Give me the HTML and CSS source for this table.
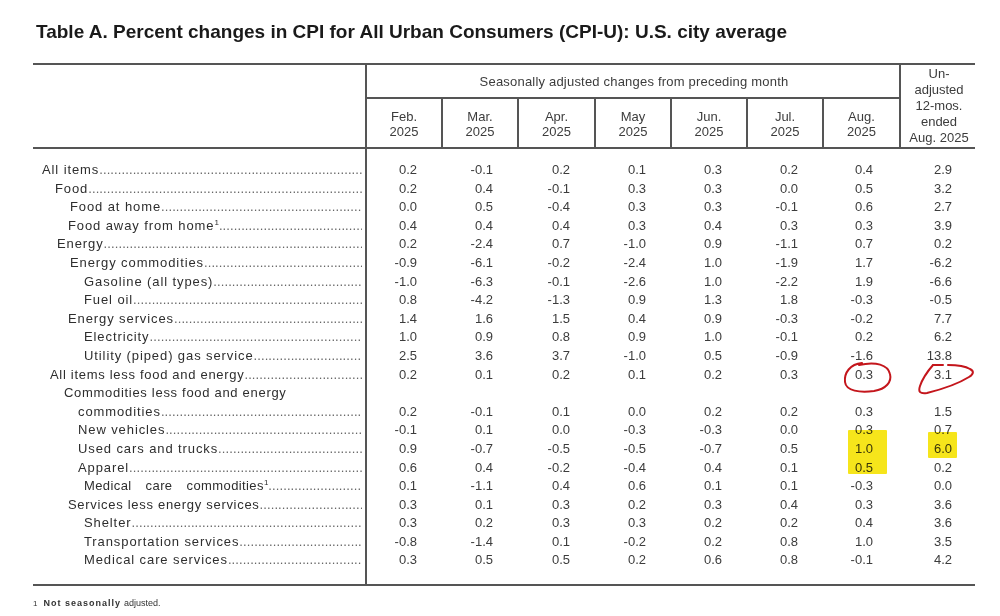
FILE: index.html
```html
<!DOCTYPE html>
<html lang="en">
<head>
<meta charset="utf-8">
<title>Table A. Percent changes in CPI</title>
<link rel="stylesheet" href="styles.css">
</head>
<body>
<div class="page">
  <h1 class="title">Table A. Percent changes in CPI for All Urban Consumers (CPI-U): U.S. city average</h1>

  <div class="table">
    <div class="thead">
      <div class="th-blank"></div>
      <div class="th-group">Seasonally adjusted changes from preceding month</div>
      <div class="th-month">Feb.<br>2025</div>
      <div class="th-month">Mar.<br>2025</div>
      <div class="th-month">Apr.<br>2025</div>
      <div class="th-month">May<br>2025</div>
      <div class="th-month">Jun.<br>2025</div>
      <div class="th-month">Jul.<br>2025</div>
      <div class="th-month">Aug.<br>2025</div>
      <div class="th-unadj">Un-<br>adjusted<br>12-mos.<br>ended<br>Aug. 2025</div>
    </div>

    <div class="tbody">
      <div class="lbl ind-a"><span class="txt">All items</span><span class="dots"></span></div>
      <div class="num">0.2</div><div class="num">-0.1</div><div class="num">0.2</div><div class="num">0.1</div><div class="num">0.3</div><div class="num">0.2</div><div class="num aug">0.4</div><div class="num un">2.9</div>

      <div class="lbl ind-c"><span class="txt">Food</span><span class="dots"></span></div>
      <div class="num">0.2</div><div class="num">0.4</div><div class="num">-0.1</div><div class="num">0.3</div><div class="num">0.3</div><div class="num">0.0</div><div class="num aug">0.5</div><div class="num un">3.2</div>

      <div class="lbl ind-e2"><span class="txt">Food at home</span><span class="dots"></span></div>
      <div class="num">0.0</div><div class="num">0.5</div><div class="num">-0.4</div><div class="num">0.3</div><div class="num">0.3</div><div class="num">-0.1</div><div class="num aug">0.6</div><div class="num un">2.7</div>

      <div class="lbl ind-e"><span class="txt">Food away from home<sup>1</sup></span><span class="dots"></span></div>
      <div class="num">0.4</div><div class="num">0.4</div><div class="num">0.4</div><div class="num">0.3</div><div class="num">0.4</div><div class="num">0.3</div><div class="num aug">0.3</div><div class="num un">3.9</div>

      <div class="lbl ind-c2"><span class="txt">Energy</span><span class="dots"></span></div>
      <div class="num">0.2</div><div class="num">-2.4</div><div class="num">0.7</div><div class="num">-1.0</div><div class="num">0.9</div><div class="num">-1.1</div><div class="num aug">0.7</div><div class="num un">0.2</div>

      <div class="lbl ind-e2"><span class="txt">Energy commodities</span><span class="dots"></span></div>
      <div class="num">-0.9</div><div class="num">-6.1</div><div class="num">-0.2</div><div class="num">-2.4</div><div class="num">1.0</div><div class="num">-1.9</div><div class="num aug">1.7</div><div class="num un">-6.2</div>

      <div class="lbl ind-g"><span class="txt">Gasoline (all types)</span><span class="dots"></span></div>
      <div class="num">-1.0</div><div class="num">-6.3</div><div class="num">-0.1</div><div class="num">-2.6</div><div class="num">1.0</div><div class="num">-2.2</div><div class="num aug">1.9</div><div class="num un">-6.6</div>

      <div class="lbl ind-g"><span class="txt">Fuel oil</span><span class="dots"></span></div>
      <div class="num">0.8</div><div class="num">-4.2</div><div class="num">-1.3</div><div class="num">0.9</div><div class="num">1.3</div><div class="num">1.8</div><div class="num aug">-0.3</div><div class="num un">-0.5</div>

      <div class="lbl ind-e"><span class="txt">Energy services</span><span class="dots"></span></div>
      <div class="num">1.4</div><div class="num">1.6</div><div class="num">1.5</div><div class="num">0.4</div><div class="num">0.9</div><div class="num">-0.3</div><div class="num aug">-0.2</div><div class="num un">7.7</div>

      <div class="lbl ind-g"><span class="txt">Electricity</span><span class="dots"></span></div>
      <div class="num">1.0</div><div class="num">0.9</div><div class="num">0.8</div><div class="num">0.9</div><div class="num">1.0</div><div class="num">-0.1</div><div class="num aug">0.2</div><div class="num un">6.2</div>

      <div class="lbl ind-g"><span class="txt">Utility (piped) gas service</span><span class="dots"></span></div>
      <div class="num">2.5</div><div class="num">3.6</div><div class="num">3.7</div><div class="num">-1.0</div><div class="num">0.5</div><div class="num">-0.9</div><div class="num aug">-1.6</div><div class="num un">13.8</div>

      <div class="lbl ind-b tight"><span class="txt">All items less food and energy</span><span class="dots"></span></div>
      <div class="num">0.2</div><div class="num">0.1</div><div class="num">0.2</div><div class="num">0.1</div><div class="num">0.2</div><div class="num">0.3</div><div class="num aug">0.3</div><div class="num un">3.1</div>

      <div class="lbl ind-d tight full"><span class="txt">Commodities less food and energy</span></div>
      <div class="lbl ind-f"><span class="txt">commodities</span><span class="dots"></span></div>
      <div class="num">0.2</div><div class="num">-0.1</div><div class="num">0.1</div><div class="num">0.0</div><div class="num">0.2</div><div class="num">0.2</div><div class="num aug">0.3</div><div class="num un">1.5</div>

      <div class="lbl ind-f"><span class="txt">New vehicles</span><span class="dots"></span></div>
      <div class="num">-0.1</div><div class="num">0.1</div><div class="num">0.0</div><div class="num">-0.3</div><div class="num">-0.3</div><div class="num">0.0</div><div class="num aug">0.3</div><div class="num un">0.7</div>

      <div class="lbl ind-f"><span class="txt">Used cars and trucks</span><span class="dots"></span></div>
      <div class="num">0.9</div><div class="num">-0.7</div><div class="num">-0.5</div><div class="num">-0.5</div><div class="num">-0.7</div><div class="num">0.5</div><div class="num aug">1.0</div><div class="num un">6.0</div>

      <div class="lbl ind-f"><span class="txt">Apparel</span><span class="dots"></span></div>
      <div class="num">0.6</div><div class="num">0.4</div><div class="num">-0.2</div><div class="num">-0.4</div><div class="num">0.4</div><div class="num">0.1</div><div class="num aug">0.5</div><div class="num un">0.2</div>

      <div class="lbl ind-g wide"><span class="txt">Medical care commodities<sup>1</sup></span><span class="dots"></span></div>
      <div class="num">0.1</div><div class="num">-1.1</div><div class="num">0.4</div><div class="num">0.6</div><div class="num">0.1</div><div class="num">0.1</div><div class="num aug">-0.3</div><div class="num un">0.0</div>

      <div class="lbl ind-e tight"><span class="txt">Services less energy services</span><span class="dots"></span></div>
      <div class="num">0.3</div><div class="num">0.1</div><div class="num">0.3</div><div class="num">0.2</div><div class="num">0.3</div><div class="num">0.4</div><div class="num aug">0.3</div><div class="num un">3.6</div>

      <div class="lbl ind-g"><span class="txt">Shelter</span><span class="dots"></span></div>
      <div class="num">0.3</div><div class="num">0.2</div><div class="num">0.3</div><div class="num">0.3</div><div class="num">0.2</div><div class="num">0.2</div><div class="num aug">0.4</div><div class="num un">3.6</div>

      <div class="lbl ind-g"><span class="txt">Transportation services</span><span class="dots"></span></div>
      <div class="num">-0.8</div><div class="num">-1.4</div><div class="num">0.1</div><div class="num">-0.2</div><div class="num">0.2</div><div class="num">0.8</div><div class="num aug">1.0</div><div class="num un">3.5</div>

      <div class="lbl ind-g"><span class="txt">Medical care services</span><span class="dots"></span></div>
      <div class="num">0.3</div><div class="num">0.5</div><div class="num">0.5</div><div class="num">0.2</div><div class="num">0.6</div><div class="num">0.8</div><div class="num aug">-0.1</div><div class="num un">4.2</div>
    </div>
  </div>

  <p class="foot"><span class="foot-num">1</span><span class="foot-a">Not seasonally</span><span class="foot-b">adjusted.</span></p>

  <div class="mark mark-1"></div>
  <div class="mark mark-2"></div>

  <svg class="circle circle-1" width="56" height="38" viewBox="0 0 56 38">
    <path d="M 22 4 C 10 5, 4 14, 5 23 C 6 32, 20 34, 34 32 C 46 30, 52 23, 50 15 C 48 6, 36 2, 19 6" fill="none" stroke="#c4161c" stroke-width="2" stroke-linecap="round"/>
  </svg>
  <svg class="circle circle-2" width="66" height="40" viewBox="0 0 66 40">
    <path d="M 20 6 L 30 6 M 35 6 C 44 6, 52 7, 57 10 C 61 12, 61 15, 56 18 C 48 23, 34 29, 14 34 C 7 35, 5 33, 7 27 C 9 21, 14 13, 20 6" fill="none" stroke="#c4161c" stroke-width="2" stroke-linecap="round" stroke-linejoin="round"/>
  </svg>
</div>
</body>
</html>
```

FILE: styles.css
```css
html, body {
  margin: 0;
  padding: 0;
  background: #ffffff;
}

body {
  font-family: "Liberation Sans", Arial, sans-serif;
  color: #333;
}

.page {
  position: relative;
  width: 942px;
  padding: 20px 0 0 33px;
}

.title {
  margin: 0 0 19px 3px;
  font-size: 19px;
  line-height: 24px;
  font-weight: 700;
  color: #1a1a1a;
  white-space: nowrap;
}

.table {
  width: 942px;
  border-top: 2px solid #555;
  border-bottom: 2px solid #555;
}

.thead,
.tbody {
  display: grid;
  grid-template-columns: 334px 76px 76px 77px 76px 76px 76px 77px 74px;
}

.thead {
  grid-template-rows: 34px 48px;
  border-bottom: 2px solid #555;
  font-size: 13px;
  color: #3c3c3c;
}

.thead > div {
  box-sizing: border-box;
}

.th-blank {
  grid-column: 1;
  grid-row: 1 / 3;
  border-right: 2px solid #555;
}

.th-group {
  grid-column: 2 / 9;
  grid-row: 1;
  border-right: 2px solid #555;
  border-bottom: 2px solid #555;
  display: flex;
  align-items: center;
  justify-content: center;
  padding-left: 2px;
  letter-spacing: 0.2px;
}

.th-month {
  grid-row: 2;
  border-right: 2px solid #555;
  display: flex;
  align-items: center;
  justify-content: center;
  text-align: center;
  line-height: 15px;
  padding-top: 1px;
}

.th-unadj {
  grid-column: 9;
  grid-row: 1 / 3;
  display: flex;
  align-items: center;
  justify-content: center;
  text-align: center;
  line-height: 16px;
  padding-left: 2px;
}

.tbody {
  grid-auto-rows: 18.6px;
  padding: 12px 0 14px;
  background: linear-gradient(#555, #555) no-repeat 332px 0 / 2px 100%;
  font-size: 13px;
  line-height: 18.6px;
}

.lbl {
  grid-column: 1;
  display: flex;
  min-width: 0;
  padding-right: 5px;
  white-space: nowrap;
  overflow: hidden;
  color: #2e2e2e;
}

.lbl.full {
  grid-column: 1 / -1;
}

.lbl .txt {
  letter-spacing: 0.9px;
  flex: none;
}

.lbl.tight .txt {
  letter-spacing: 0.7px;
}

.lbl.wide .txt {
  word-spacing: 10px;
  letter-spacing: 0.4px;
}

.lbl sup {
  font-size: 8px;
  line-height: 0;
  vertical-align: 5px;
  letter-spacing: 0;
}

.dots {
  flex: 1;
  min-width: 0;
  overflow: hidden;
  color: #666;
  letter-spacing: 0.1px;
}

.dots::after {
  content: "..............................................................................................................................................";
}

.ind-a { padding-left: 9px; }
.ind-b { padding-left: 17px; }
.ind-c { padding-left: 22px; }
.ind-c2 { padding-left: 24px; }
.ind-d { padding-left: 31px; }
.ind-e { padding-left: 35px; }
.ind-e2 { padding-left: 37px; }
.ind-f { padding-left: 45px; }
.ind-g { padding-left: 51px; }

.num {
  text-align: right;
  padding-right: 26px;
  color: #3c3c3c;
}

.num.aug {
  padding-right: 28px;
}

.num.un {
  padding-right: 23px;
}

.foot {
  margin: 11px 0 0;
  font-size: 9px;
  line-height: 12px;
  color: #333;
}

.foot-num {
  margin-right: 6px;
  font-size: 8px;
}

.foot-a {
  font-weight: 700;
  letter-spacing: 1px;
  margin-right: 3px;
}

.foot-b {
  letter-spacing: 0;
}

.mark {
  position: absolute;
  background: #f6e51b;
  mix-blend-mode: multiply;
  border-radius: 1px;
}

.mark-1 {
  left: 848px;
  top: 430px;
  width: 39px;
  height: 44px;
}

.mark-2 {
  left: 928px;
  top: 432px;
  width: 29px;
  height: 26px;
}

.circle {
  position: absolute;
}

.circle-1 {
  left: 840px;
  top: 359px;
}

.circle-2 {
  left: 913px;
  top: 359px;
}
```
